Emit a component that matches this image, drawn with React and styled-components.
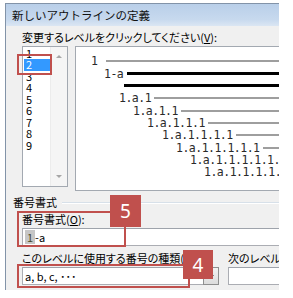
import React from 'react';
import styled, { createGlobalStyle } from 'styled-components';

const GlobalStyle = createGlobalStyle`
  * { box-sizing: border-box; }
  html, body { margin: 0; padding: 0; background: #fff; }
  body {
    font-family: "Noto Sans CJK JP", "Noto Sans", sans-serif;
    color: #000;
  }
`;

const Page = styled.div`
  position: relative;
  width: 293px;
  height: 298px;
  padding: 3px 0 0 5px;
  overflow: hidden;
`;

const Dialog = styled.div`
  width: 274px;
  height: 287px;
  border-top: 1px solid #8293a8;
  border-left: 1px solid #8293a8;
  background: #f0f0f0;
  overflow: hidden;
  display: flex;
  flex-direction: column;
`;

const TitleBar = styled.div`
  height: 22px;
  flex: none;
  padding-left: 6px;
  display: flex;
  align-items: center;
  font-size: 11.5px;
  color: #111;
  background: linear-gradient(180deg, #b9cfe9 0%, #c7d9ee 70%, #dbe6f3 100%);
`;

const Body = styled.div`
  flex: 1;
  padding: 4px 0 0 7px;
  display: flex;
  flex-direction: column;
`;

const Label = styled.div`
  font-size: 11px;
  line-height: 14px;
  height: 14px;
  white-space: nowrap;
  font-feature-settings: "palt";
  margin-left: ${p => p.$indent || 0}px;
  margin-top: ${p => p.$top || 0}px;
  overflow: hidden;
  u { text-decoration-thickness: 1px; text-underline-offset: 1px; }
`;

const LevelRow = styled.div`
  display: flex;
  align-items: flex-start;
  gap: 7px;
  margin: 2px 0 0 9px;
`;

const LevelBox = styled.div`
  width: 46px;
  height: 141px;
  flex: none;
  border: 1px solid #a3a9b1;
  background: #fff;
  display: flex;
`;

const LevelItems = styled.div`
  flex: 1;
  padding: 0.5px 0 0 1px;
`;

const LevelItem = styled.div`
  height: 11.5px;
  line-height: 11.5px;
  font-size: 11px;
  padding-left: 2px;
  background: ${p => (p.$selected ? '#3399ff' : 'transparent')};
  color: ${p => (p.$selected ? '#fff' : '#000')};
`;

const ScrollTrack = styled.div`
  width: 17px;
  flex: none;
  background: #f5f5f5;
  border-left: 1px solid #ececec;
  display: flex;
  flex-direction: column;
  justify-content: space-between;
  align-items: center;
  padding: 8px 0;
`;

const Arrow = styled.span`
  width: 0;
  height: 0;
  border-left: 3px solid transparent;
  border-right: 3px solid transparent;
  ${p => (p.$up ? 'border-bottom' : 'border-top')}: 3px solid ${p => p.$color || '#a6a6a6'};
`;

const Preview = styled.div`
  width: 204px;
  height: 145px;
  flex: none;
  border: 1px solid #a3a9b1;
  border-right: none;
  background: #fff;
  padding-top: 8px;
  overflow: hidden;
  display: flex;
  flex-direction: column;
`;

const PreviewRow = styled.div`
  display: flex;
  align-items: center;
  height: 12.35px;
  flex: none;
  padding-left: ${p => p.$indent}px;
  white-space: nowrap;
  overflow: hidden;
`;

const NumText = styled.span`
  flex: none;
  font-family: "DejaVu Sans Mono", "Liberation Mono", monospace;
  font-size: 11.5px;
  line-height: 12px;
  letter-spacing: -0.5px;
  color: #2a2a2a;
`;

const Bar = styled.div`
  flex: 1 1 auto;
  min-width: 12px;
  height: 0;
  margin-left: ${p => p.$gap}px;
  border-top: ${p => (p.$dark ? '3px solid #000' : '2px solid #9e9e9e')};
`;

const GroupHeading = styled.div`
  display: flex;
  align-items: center;
  margin-top: 4px;
  font-size: 11px;
  line-height: 14px;
  height: 14px;
  &::after {
    content: '';
    flex: 1;
    height: 1px;
    margin-left: 5px;
    background: #d7e0e9;
    box-shadow: 0 1px 0 #fff;
  }
`;

const TextField = styled.div`
  height: 18px;
  width: ${p => p.$width}px;
  flex: none;
  border: 1px solid #abadb3;
  border-top-color: #9ea3ab;
  background: #fff;
  display: flex;
  align-items: center;
  padding-left: 2px;
  font-size: 11px;
  margin-top: 2px;
  white-space: nowrap;
`;

const FieldShade = styled.span`
  background: #c6c6c6;
  color: #4a4a2a;
  padding: 0 2px;
  line-height: 14px;
`;

const FormatBlock = styled.div`
  margin-left: 9px;
  display: flex;
  flex-direction: column;
`;

const Columns = styled.div`
  display: flex;
  gap: 9px;
  margin: 5px 0 0 9px;
`;

const Column = styled.div`
  display: flex;
  flex-direction: column;
  width: ${p => p.$width}px;
  flex: none;
`;

const Combo = styled(TextField)`
  padding-right: 0;
  justify-content: space-between;
`;

const DropButton = styled.span`
  width: 16px;
  height: 18px;
  margin: -1px -1px -1px 0;
  border: 1px solid #8e8f8f;
  background: linear-gradient(#f2f2f2, #dcdcdc);
  display: flex;
  align-items: flex-end;
  justify-content: flex-end;
  padding: 0 4px 6px 0;
`;

const RedBox = styled.div`
  position: absolute;
  border: 2px solid #c0504d;
`;

const Badge = styled.div`
  position: absolute;
  background: #c0504d;
  color: #fff;
  font-family: "Noto Sans", "Liberation Sans", sans-serif;
  font-size: 19px;
  display: flex;
  align-items: center;
  justify-content: center;
`;

const levels = ['1', '2', '3', '4', '5', '6', '7', '8', '9'];

const previewRows = [
  { indent: 15, text: '1', gap: 9 },
  { indent: 28, text: '1-a', gap: 4, dark: true },
  { indent: 48, text: '', gap: 0, dark: true },
  { indent: 43, text: '1.a.1', gap: 3 },
  { indent: 57, text: '1.a.1.1', gap: 3 },
  { indent: 71, text: '1.a.1.1.1', gap: 3 },
  { indent: 86, text: '1.a.1.1.1.1', gap: 3 },
  { indent: 100, text: '1.a.1.1.1.1.1', gap: 3 },
  { indent: 114, text: '1.a.1.1.1.1.1.1', gap: 3 },
  { indent: 128, text: '1.a.1.1.1.1.1.1.1', gap: 3 },
];

export default function App() {
  return (
    <Page lang="ja">
      <GlobalStyle />
      <Dialog>
        <TitleBar>新しいアウトラインの定義</TitleBar>
        <Body>
          <Label $indent={9}>
            変更するレベルをクリックしてください(<u>V</u>):
          </Label>
          <LevelRow>
            <LevelBox>
              <LevelItems>
                {levels.map(l => (
                  <LevelItem key={l} $selected={l === '2'}>{l}</LevelItem>
                ))}
              </LevelItems>
              <ScrollTrack>
                <Arrow $up />
                <Arrow />
              </ScrollTrack>
            </LevelBox>
            <Preview>
              {previewRows.map((r, i) => (
                <PreviewRow key={i} $indent={r.indent}>
                  {r.text && <NumText>{r.text}</NumText>}
                  <Bar $gap={r.gap} $dark={r.dark} />
                </PreviewRow>
              ))}
            </Preview>
          </LevelRow>

          <GroupHeading>番号書式</GroupHeading>
          <FormatBlock>
            <Label $top={3}>番号書式(<u>O</u>):</Label>
            <TextField $width={275}>
              <FieldShade>1</FieldShade>-a
            </TextField>
          </FormatBlock>

          <Columns>
            <Column $width={197}>
              <Label>このレベルに使用する番号の種類(<u>N</u>):</Label>
              <Combo $width={197}>
                <span>a, b, c, ･･･</span>
                <DropButton><Arrow $color="#222" /></DropButton>
              </Combo>
            </Column>
            <Column $width={80}>
              <Label>次のレベルと関連付ける(<u>L</u>):</Label>
              <TextField $width={80} />
            </Column>
          </Columns>
        </Body>
      </Dialog>

      <RedBox style={{ left: 17, top: 54, width: 35, height: 21 }} />
      <RedBox style={{ left: 17, top: 211, width: 109, height: 36 }} />
      <Badge style={{ left: 110, top: 195, width: 31, height: 32 }}>5</Badge>
      <RedBox style={{ left: 17, top: 264, width: 173, height: 24 }} />
      <Badge style={{ left: 183, top: 250, width: 30, height: 29 }}>4</Badge>
    </Page>
  );
}
